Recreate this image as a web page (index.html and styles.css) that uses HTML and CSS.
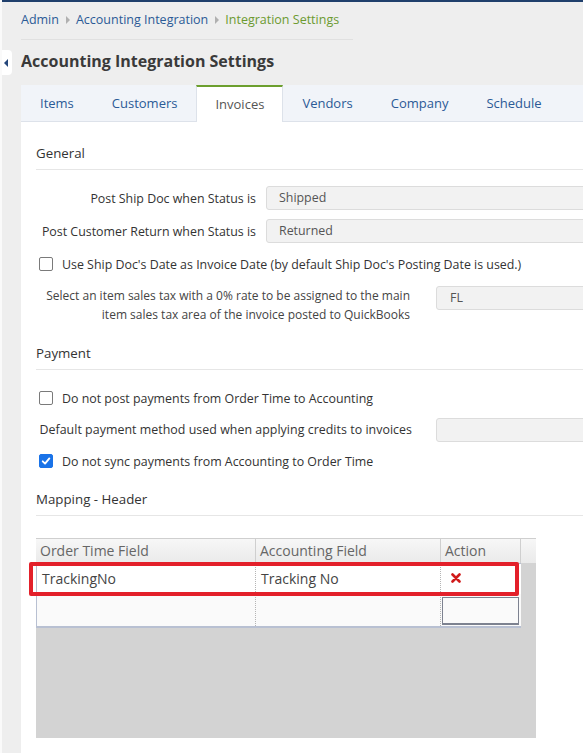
FILE: index.html
```html
<!DOCTYPE html>
<html>
<head>
<meta charset="utf-8">
<link rel="stylesheet" href="styles.css">
</head>
<body>
<div class="topbar"></div>
<div class="toggle"><span class="tri"></span></div>
<div class="page">
  <div class="breadcrumb">
    <a class="crumb">Admin</a><span class="sep"></span><a class="crumb">Accounting Integration</a><span class="sep"></span><span class="crumb current">Integration Settings</span>
  </div>
  <h1 class="title">Accounting Integration Settings</h1>
  <div class="tabs">
    <div class="tab">Items</div>
    <div class="tab">Customers</div>
    <div class="tab active">Invoices</div>
    <div class="tab">Vendors</div>
    <div class="tab">Company</div>
    <div class="tab">Schedule</div>
  </div>
  <div class="panel">
    <div class="section-head">General</div>
    <div class="row first">
      <div class="lbl lbl-a">Post Ship Doc when Status is</div>
      <div class="select">Shipped</div>
    </div>
    <div class="row">
      <div class="lbl lbl-a">Post Customer Return when Status is</div>
      <div class="select">Returned</div>
    </div>
    <label class="check-row"><span class="cb"></span>Use Ship Doc's Date as Invoice Date (by default Ship Doc's Posting Date is used.)</label>
    <div class="row tax">
      <div class="lbl lbl-b small">Select an item sales tax with a 0% rate to be assigned to the main<br>item sales tax area of the invoice posted to QuickBooks</div>
      <div class="select">FL</div>
    </div>

    <div class="section-head sec2">Payment</div>
    <label class="check-row cr-pay"><span class="cb"></span>Do not post payments from Order Time to Accounting</label>
    <div class="row pay">
      <div class="lbl lbl-c">Default payment method used when applying credits to invoices</div>
      <div class="select"></div>
    </div>
    <label class="check-row cr-sync"><span class="cb checked"><svg viewBox="0 0 14 14" width="14" height="14"><path d="M3.2 7.4 L5.9 10 L10.9 4" fill="none" stroke="#fff" stroke-width="2.2" stroke-linecap="round" stroke-linejoin="round"/></svg></span>Do not sync payments from Accounting to Order Time</label>

    <div class="section-head sec3">Mapping - Header</div>
    <div class="grid">
      <div class="ghead">
        <div class="hc c1">Order Time Field</div>
        <div class="hc c2">Accounting Field</div>
        <div class="hc c3">Action</div>
        <div class="hc c4"></div>
      </div>
      <div class="gbody">
        <div class="grow r1">
          <div class="gc c1">TrackingNo</div>
          <div class="gc c2">Tracking No</div>
          <div class="gc c3"><svg class="xicon" viewBox="0 0 10 10" width="10" height="10"><path d="M1.5 1.5 L8.5 8.5 M8.5 1.5 L1.5 8.5" stroke="#d01a1a" stroke-width="2.6" stroke-linecap="round"/></svg></div>
        </div>
        <div class="grow r2">
          <div class="gc c1"></div>
          <div class="gc c2"></div>
          <div class="gc c3"><div class="editbox"></div></div>
        </div>
      </div>
      <div class="highlight"></div>
    </div>
  </div>
</div>
</body>
</html>
```
FILE: styles.css
```css
html, body {
  margin: 0;
  padding: 0;
  overflow: hidden;
}
body {
  background: #eeeeee;
  font-family: "Open Sans", "Noto Sans", sans-serif;
  color: #333;
  width: 583px;
  height: 753px;
  border-left: 2px solid #fafafa;
  box-sizing: border-box;
  position: relative;
}
.topbar {
  height: 2px;
  background: #1f3f6c;
  margin-left: -2px;
}
.toggle {
  position: absolute;
  left: -2px;
  top: 50px;
  width: 12px;
  height: 25px;
  background: #fff;
  border-radius: 0 4px 4px 0;
}
.tri {
  position: absolute;
  left: 4px;
  top: 9px;
  width: 0;
  height: 0;
  border-top: 4px solid transparent;
  border-bottom: 4px solid transparent;
  border-right: 4px solid #24467a;
}
.page {
  margin-left: 19px;
  width: 562px;
  height: 751px;
  overflow: hidden;
}
.breadcrumb {
  width: 332px;
  padding: 9px 0 10px;
  line-height: 18px;
  font-size: 12.5px;
  border-bottom: 1px solid #e0e0e0;
  display: flex;
  align-items: center;
  white-space: nowrap;
}
.crumb {
  color: #2b5a96;
}
.crumb.current {
  color: #6c9a30;
}
.sep {
  display: inline-block;
  width: 0;
  height: 0;
  border-top: 4px solid transparent;
  border-bottom: 4px solid transparent;
  border-left: 4px solid #b0b0b0;
  margin: 0 6px 0 7px;
}
.title {
  margin: 9px 0 12px;
  font-size: 16px;
  line-height: 24px;
  font-weight: 700;
  color: #3a3a3a;
}
.tabs {
  display: flex;
  height: 36px;
  background: #f1f4f9;
  border-bottom: 1px solid #dde2ea;
}
.tab {
  padding: 0 19px;
  line-height: 36px;
  font-size: 13px;
  color: #2b5a96;
  white-space: nowrap;
}
.tab.active {
  background: #fff;
  color: #555;
  border-top: 2px solid #6c9f2e;
  border-left: 1px solid #dde2ea;
  border-right: 1px solid #dde2ea;
  padding: 0 18px;
  line-height: 34px;
  margin-bottom: -1px;
  height: 35px;
}
.panel {
  background: #fff;
  padding: 0 0 20px 15px;
  min-height: 640px;
}
.section-head {
  padding-top: 21px;
  padding-bottom: 6px;
  line-height: 20px;
  font-size: 13.3px;
  color: #333;
  border-bottom: 1px solid #e6e6e6;
}
.row {
  display: flex;
  align-items: center;
  font-size: 12.4px;
  height: 24px;
  margin-top: 9px;
}
.row.first { margin-top: 16px; }
.lbl {
  text-align: right;
  white-space: nowrap;
  color: #333;
}
.lbl-a { width: 220px; margin-right: 10px; }
.lbl-b { width: 374px; margin-right: 26px; }
.lbl-c { width: 376px; margin-right: 24px; letter-spacing: 0.003em; }
.small {
  font-size: 12px;
  line-height: 19px;
  color: #444;
}
.select {
  flex: 1;
  height: 22px;
  line-height: 22px;
  background: #f2f2f2;
  border: 1px solid #dcdcdc;
  border-radius: 3px;
  padding-left: 12px;
  margin-right: -20px;
  color: #555;
  font-size: 12.4px;
}
.row.tax {
  height: 38px;
  margin-top: 12px;
  align-items: flex-start;
}
.row.tax .select { margin-top: 0; padding-left: 13px; }
.check-row {
  display: flex;
  align-items: center;
  height: 20px;
  margin-top: 11px;
  padding-left: 3px;
  font-size: 12.4px;
  color: #333;
  white-space: nowrap;
}
.cb {
  width: 12px;
  height: 12px;
  border: 1px solid #7a7a7a;
  border-radius: 2px;
  background: #fff;
  margin-right: 9px;
  display: flex;
  align-items: center;
  justify-content: center;
}
.cb.checked {
  background: #1a73e8;
  border-color: #1a73e8;
}
.sec2 { padding-top: 19px; }
.cr-pay { margin-top: 18px; }
.row.pay { margin-top: 10px; height: 23px; }
.cr-sync { margin-top: 10px; }
.sec3 { padding-top: 18px; }
.grid {
  position: relative;
  margin-top: 22px;
  width: 500px;
  height: 200px;
  background: #d3d3d3;
}
.ghead {
  display: flex;
  height: 24px;
  background: linear-gradient(#f7f7f7, #eaeaea);
  border-top: 1px solid #cfcfcf;
}
.hc {
  box-sizing: border-box;
  border-right: 1px solid #cfcfcf;
  padding-left: 4px;
  font-size: 14px;
  line-height: 24px;
  color: #666;
  white-space: nowrap;
}
.c1 { width: 220px; }
.c2 { width: 185px; }
.c3 { width: 80px; }
.c4 { width: 15px; border-right: none; }
.gbody {
  width: 485px;
  border-left: 1px solid #b8c0d2;
  border-bottom: 2px solid #b8c0d2;
  box-sizing: border-box;
}
.grow {
  display: flex;
  font-size: 14px;
  color: #444;
}
.grow.r1 {
  height: 30px;
  background: #fff;
  border-top: 1px solid #b8c0d2;
}
.grow.r2 {
  height: 32px;
  background: #fafafa;
}
.gc {
  box-sizing: border-box;
  border-right: 1px dotted #b5b5b5;
  padding-left: 5px;
  line-height: 30px;
  white-space: nowrap;
}
.gc.c1 { width: 219px; }
.gc.c3 { border-right: none; padding-left: 10px; width: 80px; }
.xicon { vertical-align: 1px; }
.r2 .gc.c3 { padding: 3px 0 0 1px; }
.editbox {
  width: 77px;
  height: 28px;
  box-sizing: border-box;
  border: 1px solid #7d8290;
  border-bottom-width: 2px;
  background: #fafafa;
}
.highlight {
  position: absolute;
  left: -7px;
  top: 24px;
  width: 490px;
  height: 34px;
  box-sizing: border-box;
  border: 4px solid #e3202a;
  border-radius: 2px;
}
```
